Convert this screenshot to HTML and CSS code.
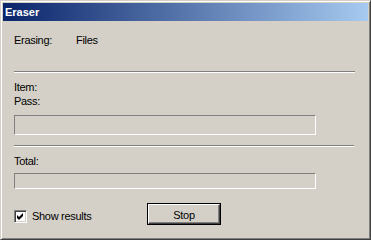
FILE: index.html
```html
<!DOCTYPE html>
<html>
<head>
<meta charset="utf-8">
<link rel="stylesheet" href="styles.css">
</head>
<body>
<div class="window">
  <div class="titlebar"><span class="title">Eraser</span></div>
  <div class="content">
    <div class="row erasing"><span class="label">Erasing:</span><span class="value">Files</span></div>
    <div class="sep sep1"></div>
    <div class="line item">Item:</div>
    <div class="line">Pass:</div>
    <div class="progress p1"></div>
    <div class="sep sep2"></div>
    <div class="line total">Total:</div>
    <div class="progress p2"></div>
    <div class="footer">
      <div class="check">
        <span class="box"><svg width="9" height="9" viewBox="0 0 9 9"><polygon points="1,3 3,5 7,1 7,4 3,8 1,6" fill="#000"/></svg></span>
        <span class="check-label">Show results</span>
      </div>
      <div class="button"><span class="button-inner">Stop</span></div>
    </div>
  </div>
</div>
</body>
</html>
```
FILE: styles.css
```css
html, body {
  margin: 0;
  padding: 0;
  background: #d4d0c8;
}
.window {
  width: 371px;
  height: 240px;
  box-sizing: border-box;
  background: #d4d0c8;
  border-top: 1px solid #d4d0c8;
  border-left: 1px solid #d4d0c8;
  border-right: 1px solid #404040;
  border-bottom: 1px solid #404040;
  box-shadow: inset 1px 1px 0 #ffffff, inset -1px -1px 0 #808080;
  padding: 2px;
  font-family: "Liberation Sans", Arial, sans-serif;
  font-size: 11px;
  letter-spacing: -0.3px;
  color: #000;
  overflow: hidden;
}
.titlebar {
  height: 18px;
  box-sizing: border-box;
  padding: 1px 0 0 2px;
  line-height: 17px;
  background: linear-gradient(to right, #0a246a, #a6caf0);
  color: #fff;
  font-weight: bold;
  letter-spacing: 0;
}
.content {
  padding: 0 0 0 11px;
}
.line, .row {
  line-height: 14px;
}
.erasing {
  margin-top: 12px;
  display: flex;
}
.erasing .label {
  width: 62px;
}
.sep {
  border-top: 1px solid #808080;
  border-bottom: 1px solid #ffffff;
  height: 0;
}
.sep1 {
  margin-top: 24px;
  width: 341px;
}
.item {
  margin-top: 7px;
}
.progress {
  box-sizing: border-box;
  width: 302px;
  border-top: 1px solid #808080;
  border-left: 1px solid #808080;
  border-right: 1px solid #ffffff;
  border-bottom: 1px solid #ffffff;
}
.p1 {
  margin-top: 7px;
  height: 20px;
}
.sep2 {
  margin-top: 10px;
  width: 340px;
}
.total {
  margin-top: 7px;
}
.p2 {
  margin-top: 5px;
  height: 16px;
}
.footer {
  margin-top: 14px;
  display: flex;
  align-items: flex-start;
}
.check {
  width: 133px;
  margin-top: 7px;
  display: flex;
  align-items: center;
}
.box {
  width: 13px;
  height: 13px;
  box-sizing: border-box;
  background: #fff;
  border-top: 1px solid #808080;
  border-left: 1px solid #808080;
  border-right: 1px solid #ffffff;
  border-bottom: 1px solid #ffffff;
  box-shadow: inset 1px 1px 0 #404040, inset -1px -1px 0 #d4d0c8;
  display: flex;
  align-items: center;
  justify-content: center;
  margin-right: 5px;
}
.box svg {
  display: block;
}
.check-label {
  line-height: 13px;
}
.button {
  width: 74px;
  height: 22px;
  box-sizing: border-box;
  border: 1px solid #000;
}
.button-inner {
  display: flex;
  align-items: center;
  justify-content: center;
  height: 100%;
  box-sizing: border-box;
  border-top: 1px solid #ffffff;
  border-left: 1px solid #ffffff;
  border-right: 1px solid #404040;
  border-bottom: 1px solid #404040;
  box-shadow: inset -1px -1px 0 #808080;
  padding-top: 1px;
}
```
